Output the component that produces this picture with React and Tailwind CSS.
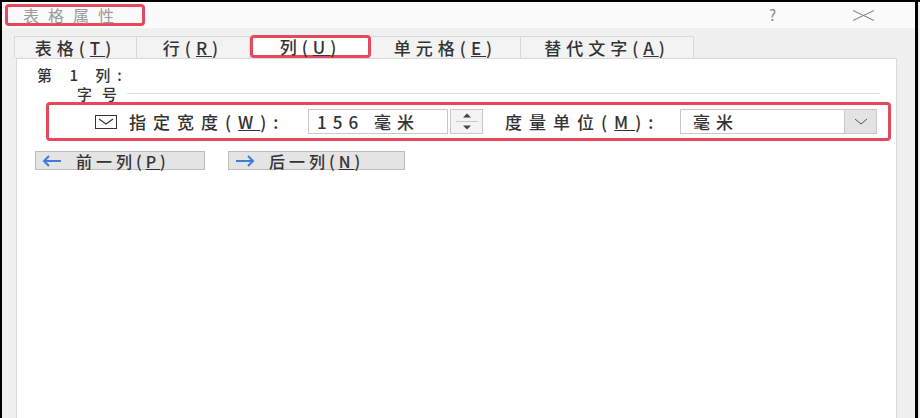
import React from "react";

const font = { fontFamily: '"Noto Sans CJK SC", "Noto Sans", sans-serif' };

function Tab({ label, hot, className }) {
  return (
    <div
      className={
        "flex h-[22px] items-center justify-center border border-b-0 border-[#d9d9d9] bg-[#f3f3f3] text-[17px] font-medium leading-none tracking-[5px] text-[#333] " +
        className
      }
    >
      {label}(<u>{hot}</u>)
    </div>
  );
}

function Spinner() {
  return (
    <div className="ml-[2px] flex h-[25px] w-[33px] flex-col items-center justify-center gap-[3px] border border-[#c8c8c8] bg-[#f4f4f4]">
      <svg width="10" height="5" viewBox="0 0 10 5">
        <path d="M1 4.5 L5 0.5 L9 4.5 Z" fill="#444" />
      </svg>
      <div className="h-px w-[22px] bg-[#c8c8c8]" />
      <svg width="10" height="5" viewBox="0 0 10 5">
        <path d="M1 0.5 L5 4.5 L9 0.5 Z" fill="#444" />
      </svg>
    </div>
  );
}

export default function App() {
  return (
    <div
      style={font}
      className="flex h-[418px] w-[920px] flex-col border-l-2 border-t-2 border-black bg-[#f0f0f0] pr-[2px]"
    >
      <div className="flex flex-1 flex-col border-r-[3px] border-black">
        {/* title bar */}
        <div className="flex h-[26px] items-center bg-[#fbfbfb]">
          <div className="ml-[3px] flex h-[22px] w-[140px] items-center rounded-[4px] border-[3px] border-[#e8485e] pl-[15px] text-[16px] leading-none tracking-[9px] text-[#9a9a9a]">
            表格属性
          </div>
          <div className="ml-auto mr-[76px] text-[15px] text-[#888]">?</div>
          <svg width="23" height="11" viewBox="0 0 23 11" className="mr-[40px]">
            <path d="M1 0.5 L22 10.5 M22 0.5 L1 10.5" stroke="#777" strokeWidth="1" />
          </svg>
        </div>

        {/* tabs */}
        <div className="flex h-[30px] items-end pl-[12px]">
          <Tab label="表格" hot="T" className="w-[123px]" />
          <Tab label="行" hot="R" className="w-[113px] border-l-0" />
          <div className="flex h-[23px] w-[121px] items-center justify-center rounded-[4px] border-[3px] border-[#e8485e] bg-white text-[17px] font-medium leading-none tracking-[5px] text-[#333]">
            列(<u>U</u>)
          </div>
          <Tab label="单元格" hot="E" className="w-[150px] border-l-0" />
          <Tab label="替代文字" hot="A" className="w-[173px] border-l-0" />
        </div>

        {/* panel */}
        <div className="ml-[14px] mr-[18px] flex flex-1 flex-col border border-b-0 border-[#d9d9d9] bg-white text-[17px] font-medium text-[#333]">
          <div className="ml-[20px] mt-[5px] flex h-[20px] items-center text-[15px] leading-none tracking-[7px]">
            第 1 列:
          </div>
          <div className="ml-[60px] flex h-[18px] items-center">
            <span className="text-[15px] leading-none tracking-[10px]">字号</span>
            <div className="ml-[0px] mr-[16px] h-px flex-1 bg-[#dcdcdc]" />
          </div>

          <div className="ml-[29px] mr-[5px] flex h-[39px] items-center rounded-[4px] border-[3px] border-[#e8485e] leading-none">
            <svg width="22" height="14" viewBox="0 0 22 14" className="ml-[46px]">
              <rect x="0.5" y="0.5" width="21" height="13" fill="white" stroke="#333" />
              <path d="M4 4 L11 9 L18 4" fill="none" stroke="#333" strokeWidth="1.2" />
            </svg>
            <span className="ml-[12px] w-[166px] tracking-[7px]">
              指定宽度(<u>W</u>):
            </span>
            <div className="ml-[13px] flex h-[25px] w-[140px] items-center border border-[#c8c8c8] pl-[8px] tracking-[6px]">
              156 毫米
            </div>
            <Spinner />
            <span className="ml-[22px] w-[170px] tracking-[7px]">
              度量单位(<u>M</u>):
            </span>
            <div className="ml-[5px] flex h-[25px] w-[197px] items-center border border-[#c8c8c8] pl-[12px] tracking-[6px]">
              <span className="flex-1">毫米</span>
              <div className="flex h-full w-[32px] items-center justify-center border-l border-[#c8c8c8] bg-[#e3e3e3]">
                <svg width="14" height="7" viewBox="0 0 14 7">
                  <path d="M1 1 L7 6 L13 1" fill="none" stroke="#555" strokeWidth="1" />
                </svg>
              </div>
            </div>
          </div>

          <div className="ml-[18px] mt-[10px] flex gap-[23px]">
            <button className="flex h-[19px] w-[170px] items-center border border-[#bcbcbc] bg-[#e4e4e4] pl-[6px] text-[16px] font-medium leading-none tracking-[4px] text-[#333]">
              <svg width="20" height="12" viewBox="0 0 20 12" className="mr-[14px]">
                <path d="M19 6 H2 M7 1 L2 6 L7 11" fill="none" stroke="#3b7dd8" strokeWidth="2" />
              </svg>
              前一列(<u>P</u>)
            </button>
            <button className="flex h-[19px] w-[177px] items-center border border-[#bcbcbc] bg-[#e4e4e4] pl-[6px] text-[16px] font-medium leading-none tracking-[4px] text-[#333]">
              <svg width="20" height="12" viewBox="0 0 20 12" className="mr-[14px]">
                <path d="M1 6 H18 M13 1 L18 6 L13 11" fill="none" stroke="#3b7dd8" strokeWidth="2" />
              </svg>
              后一列(<u>N</u>)
            </button>
          </div>
        </div>
      </div>
    </div>
  );
}
